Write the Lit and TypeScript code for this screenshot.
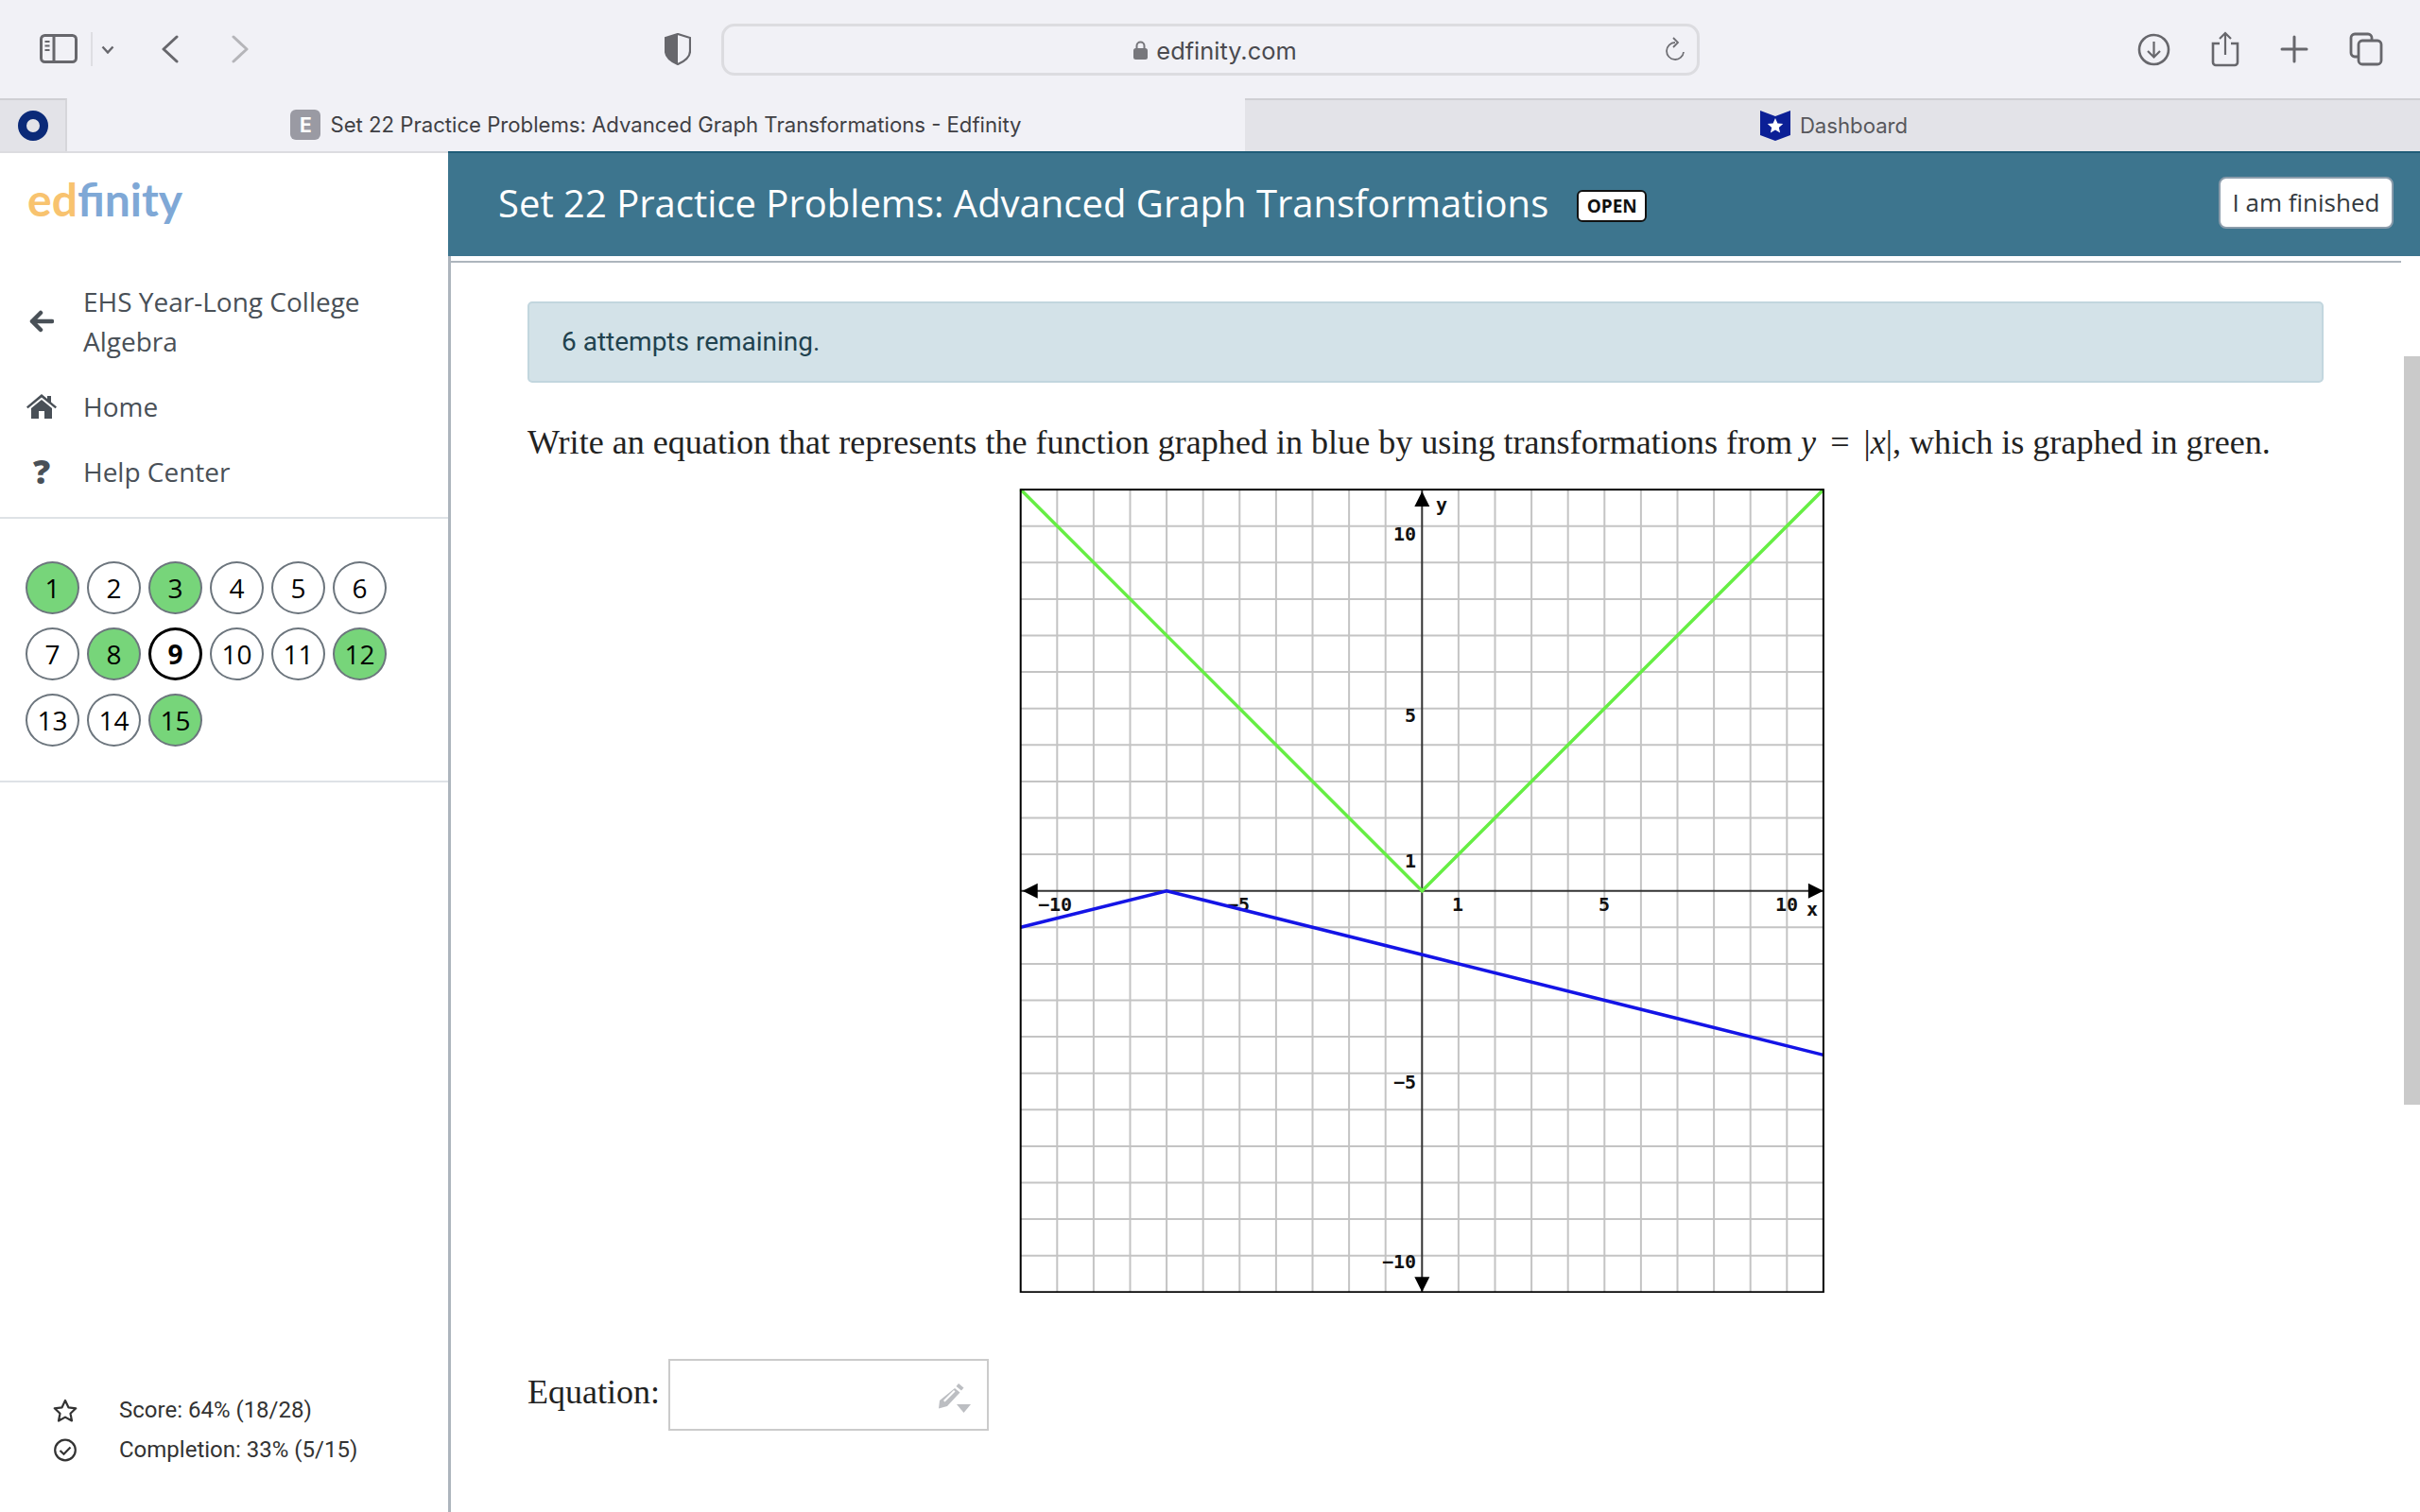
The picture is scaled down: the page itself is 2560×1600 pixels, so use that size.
import { LitElement, css, html, svg } from 'lit';
import { customElement } from 'lit/decorators.js';

const STEP = 38.6;
const OX = 426.3;
const OY = 426.7;
const px = (u: number) => OX + u * STEP;
const py = (u: number) => OY - u * STEP;

const PROBLEMS = [
    { n: 1, done: true }, { n: 2 }, { n: 3, done: true }, { n: 4 }, { n: 5 }, { n: 6 },
    { n: 7 }, { n: 8, done: true }, { n: 9, current: true }, { n: 10 }, { n: 11 }, { n: 12, done: true },
    { n: 13 }, { n: 14 }, { n: 15, done: true },
] as { n: number; done?: boolean; current?: boolean }[];

const GRID_UNITS = [-10, -9, -8, -7, -6, -5, -4, -3, -2, -1, 1, 2, 3, 4, 5, 6, 7, 8, 9, 10];

// [text, x, baseline] in graph coordinates
const GRAPH_LABELS: [string, number, number][] = [
    ['10', 396, 56], ['5', 408, 248], ['1', 408, 402],
    ['\u22125', 396, 636], ['\u221210', 384, 826],
    ['\u221210', 20, 448], ['\u22125', 220, 448], ['1', 458, 448], ['5', 613, 448], ['10', 800, 448],
    ['x', 833, 453], ['y', 441, 25],
];

@customElement('app-root')
export class AppRoot extends LitElement {
    static styles = css`
        :host {
            display: block;
            width: 2560px;
            height: 1600px;
            overflow: hidden;
            background: #fff;
            font-family: "Open Sans", sans-serif;
        }

        .toolbar {
            height: 104px;
            background: #f1f1f6;
            display: flex;
            align-items: center;
            padding: 0 39px 0 42px;
            box-sizing: border-box;
            color: #67676c;
        }
        .toolbar svg { display: block; flex: none; }
        .tb-divider { width: 2px; height: 36px; background: #dedee2; margin: 0 9px 0 14px; }
        .tb-back { margin-left: 49px; }
        .tb-forward { margin-left: 54px; }
        .tb-shield { margin-left: 439px; }
        .urlbar {
            margin-left: 32px;
            width: 1035px;
            height: 55px;
            box-sizing: border-box;
            border: 3px solid #dcdce0;
            border-radius: 14px;
            position: relative;
            display: flex;
            align-items: center;
            justify-content: center;
            gap: 9px;
            padding: 2px 0 0 10px;
            font-family: Inter, sans-serif;
            font-size: 25.4px;
            color: #4a4a4f;
        }
        .url-reload { position: absolute; right: 12px; top: 11px; }
        .tb-actions { margin-left: auto; display: flex; align-items: center; gap: 43px; }

        .tabs {
            height: 56px;
            display: flex;
            font-family: Inter, sans-serif;
            font-size: 22.15px;
            color: #3f3f44;
        }
        .tab {
            display: flex;
            align-items: center;
            justify-content: center;
            gap: 10px;
            box-sizing: border-box;
        }
        .tab-pinned { width: 71px; background: #e3e3e8; border-top: 2px solid #cfcfd3; border-right: 2px solid #d6d6da; }
        .tab-active { width: 1246px; background: #f1f1f6; }
        .tab-other { flex: 1; background: #e3e3e8; border-top: 2px solid #cfcfd3; color: #57575c; padding-left: 3px; }
        .favicon {
            width: 32px;
            height: 32px;
            border-radius: 6px;
            background: #9a9aa3;
            color: #fff;
            font-weight: 700;
            font-size: 21px;
            display: flex;
            align-items: center;
            justify-content: center;
        }

        .page { height: 1440px; display: flex; position: relative; }

        aside {
            width: 477px;
            flex: none;
            box-sizing: border-box;
            border-right: 3px solid #adb5bd;
            border-top: 2px solid #dcdce0;
            display: flex;
            flex-direction: column;
            color: #495057;
        }
        .logo {
            font-family: Lato, sans-serif;
            font-weight: 700;
            font-size: 48px;
            line-height: 60px;
            height: 60px;
            margin: 19px 0 2px 29px;
            color: #7fa8d6;
        }
        .logo span { color: #f8c36f; }
        .nav { margin-top: 55px; display: flex; flex-direction: column; border-bottom: 2px solid #dee2e6; padding-bottom: 27px; }
        .nav-item {
            display: grid;
            grid-template-columns: 88px 1fr;
            align-items: center;
            font-size: 28px;
            line-height: 42px;
            margin-bottom: 27px;
        }
        .nav-item:last-child { margin-bottom: 0; }
        .nav-icon { display: flex; justify-content: center; width: 88px; }
        .nav-icon svg { display: block; }
        .help-icon { font-weight: 800; font-size: 36px; line-height: 42px; color: #495057; }

        .bubbles {
            display: grid;
            grid-template-columns: repeat(6, 57px);
            grid-auto-rows: 56px;
            column-gap: 8px;
            row-gap: 14px;
            padding: 45px 0 36px 27px;
            border-bottom: 2px solid #dee2e6;
        }
        .bubble {
            box-sizing: border-box;
            border: 2px solid #6c757d;
            border-radius: 50%;
            background: #fff;
            color: #000;
            font-size: 28px;
            display: flex;
            align-items: center;
            justify-content: center;
        }
        .bubble.done { background: #77d57a; }
        .bubble.current { border: 3px solid #000; font-weight: 700; }

        .stats {
            margin-top: auto;
            padding: 0 0 45px 56px;
            font-family: Roboto, sans-serif;
            font-size: 24px;
            line-height: 42px;
            color: #333;
        }
        .stat { display: flex; align-items: center; }
        .stat svg { display: block; flex: none; margin-right: 44px; }

        main { flex: 1; min-width: 0; display: flex; flex-direction: column; }
        .banner {
            height: 111px;
            flex: none;
            margin-left: -3px;
            background: #3d758e;
            border-top: 2px solid #1f5c78;
            box-sizing: border-box;
            display: flex;
            align-items: center;
            padding: 0 28px 4px 53px;
            color: #fff;
        }
        .banner h1 { margin: 0; font-weight: 400; font-size: 40px; line-height: 1; }
        .badge {
            margin: 6px 0 0 30px;
            box-sizing: border-box;
            width: 74px;
            height: 34px;
            background: #fff;
            color: #111;
            border: 2px solid #111;
            border-radius: 6px;
            font-size: 19px;
            font-weight: 700;
            display: flex;
            align-items: center;
            justify-content: center;
        }
        .finish {
            margin: 0 0 0 auto;
            box-sizing: border-box;
            width: 185px;
            height: 55px;
            background: #fff;
            border: 2px solid #8b9cab;
            border-radius: 8px;
            color: #343a40;
            font-family: inherit;
            font-size: 26px;
            padding: 0 0 2px;
        }
        .rule { height: 2px; background: #adb5bd; margin: 5px 20px 0 0; flex: none; }

        .content { padding: 41px 102px 0 81px; }
        .alert {
            height: 86px;
            box-sizing: border-box;
            background: #d3e2e8;
            border: 2px solid #c2d6de;
            border-radius: 5px;
            display: flex;
            align-items: center;
            padding: 0 34px 2px;
            font-family: Roboto, sans-serif;
            font-size: 28px;
            color: #21424f;
        }
        .question {
            margin: 38px 0 0;
            font-family: "Liberation Serif", serif;
            font-size: 36.09px;
            line-height: 50px;
            color: #222;
            white-space: nowrap;
        }
        .math { font-style: italic; }
        .eq { margin: 0 6px; }
        .graph { display: block; margin: 23px 0 0 520px; }
        .graph text { font-family: "DejaVu Sans Mono", monospace; font-weight: 700; font-size: 20px; fill: #111; }

        .answer { display: flex; align-items: center; margin-top: 70px; }
        .answer label { font-family: "Liberation Serif", serif; font-size: 36px; color: #222; margin: 0 9px 6px 0; }
        .field {
            width: 339px;
            height: 76px;
            box-sizing: border-box;
            border: 2px solid #cbcbcb;
            display: flex;
            align-items: center;
            justify-content: flex-end;
            padding-right: 17px;
        }
        .field svg { display: block; margin-top: 6px; }

        .scrollbar { position: absolute; right: 0; top: 217px; width: 17px; height: 792px; background: #cacaca; }
    `;

    renderToolbar() {
        return html`
            <div class="toolbar">
                <svg width="40" height="32" viewBox="0 0 40 32" fill="none" stroke="#67676c" stroke-width="3">
                    <rect x="1.5" y="1.5" width="37" height="28" rx="4"/>
                    <path d="M15 2v27"/>
                    <path d="M5.5 8h5M5.5 12.5h5M5.5 17h5" stroke-width="2"/>
                </svg>
                <div class="tb-divider"></div>
                <svg width="14" height="9" viewBox="0 0 14 9" fill="none" stroke="#67676c" stroke-width="2.4"><path d="M1.5 1.5L7 7.5l5.5-6"/></svg>
                <svg class="tb-back" width="20" height="30" viewBox="0 0 20 30" fill="none" stroke="#67676c" stroke-width="3" stroke-linecap="round" stroke-linejoin="round"><path d="M17 2L3 15l14 13"/></svg>
                <svg class="tb-forward" width="20" height="30" viewBox="0 0 20 30" fill="none" stroke="#b5b5b9" stroke-width="3" stroke-linecap="round" stroke-linejoin="round"><path d="M3 2l14 13L3 28"/></svg>
                <svg class="tb-shield" width="28" height="34" viewBox="0 0 28 34">
                    <path d="M14 1L27 5v14c0 6-6 11-13 14C7 30 1 25 1 19V5z" fill="none" stroke="#67676c" stroke-width="2.2"/>
                    <path d="M14 1L1 5v14c0 6 6 11 13 14z" fill="#67676c"/>
                </svg>
                <div class="urlbar">
                    <svg width="15" height="20" viewBox="0 0 15 20"><path d="M3.5 9V5.5a4 4 0 0 1 8 0V9" fill="none" stroke="#77777c" stroke-width="2"/><rect y="8" width="15" height="12" rx="2.5" fill="#77777c"/></svg>
                    edfinity.com
                    <svg class="url-reload" width="22" height="28" viewBox="0 0 22 28" fill="none" stroke="#6f6f74" stroke-width="1.8"><path d="M11 6a9 9 0 1 0 9 10"/><path d="M9 1l5 5-5 5"/></svg>
                </div>
                <div class="tb-actions">
                    <svg width="35" height="35" viewBox="0 0 35 35" fill="none" stroke="#67676c" stroke-width="2.6"><circle cx="17.5" cy="17.5" r="15.5"/><path d="M17.5 9v16M11 19l6.5 6.500L24 19" stroke-width="2.2"/></svg>
                    <svg width="30" height="38" viewBox="0 0 30 38" fill="none" stroke="#67676c" stroke-width="2.6"><path d="M9 13H2v20a3 3 0 0 0 3 3h20a3 3 0 0 0 3-3V13h-7"/><path d="M15 25V2M9 8l6-6 6 6" stroke-width="2.200"/></svg>
                    <svg width="30" height="30" viewBox="0 0 30 30" stroke="#67676c" stroke-width="3" stroke-linecap="round"><path d="M15 2v26M2 15h26"/></svg>
                    <svg width="36" height="36" viewBox="0 0 36 36" fill="none" stroke="#67676c" stroke-width="2.8"><path d="M9 26H6a4 4 0 0 1-4-4V6a4 4 0 0 1 4-4h14a4 4 0 0 1 4 4v3"/><rect x="10" y="9" width="24" height="25" rx="4"/></svg>
                </div>
            </div>
        `;
    }

    renderTabs() {
        return html`
            <div class="tabs">
                <div class="tab tab-pinned">
                    <svg width="32" height="32" viewBox="0 0 32 32"><circle cx="16" cy="16" r="11.500" fill="none" stroke="#0b2a78" stroke-width="9"/></svg>
                </div>
                <div class="tab tab-active">
                    <span class="favicon">E</span>
                    Set 22 Practice Problems: Advanced Graph Transformations - Edfinity
                </div>
                <div class="tab tab-other">
                    <svg width="32" height="32" viewBox="0 0 32 32">
                        <path d="M0 0l16 6 16-6v26l-16 6-16-6z" fill="#0b1f96"/>
                        <path d="M16 8l2.400 5.400 5.800.6-4.400 3.900 1.300 5.700-5.100-3-5.100 3 1.300-5.700-4.400-3.900 5.800-.6z" fill="#fff"/>
                    </svg>
                    Dashboard
                </div>
            </div>
        `;
    }

    renderSidebar() {
        return html`
            <aside>
                <div class="logo"><span>ed</span>finity</div>
                <div class="nav">
                    <div class="nav-item">
                        <span class="nav-icon">
                            <svg width="26" height="24" viewBox="0 0 26 24" fill="none" stroke="#495057" stroke-width="4.500" stroke-linecap="round" stroke-linejoin="round"><path d="M24 12H3M12 3l-9 9 9 9"/></svg>
                        </span>
                        <span>EHS Year-Long College<br>Algebra</span>
                    </div>
                    <div class="nav-item">
                        <span class="nav-icon">
                            <svg width="32" height="26" viewBox="0 0 32 26" fill="#495057"><path d="M16 0l6 5V2h4v6.500l6 5-1.500 1.800L16 3.500 1.500 15.300 0 13.500z"/><path d="M16 6l11 9v11h-8v-8h-6v8H5V15z"/></svg>
                        </span>
                        <span>Home</span>
                    </div>
                    <div class="nav-item">
                        <span class="nav-icon help-icon">?</span>
                        <span>Help Center</span>
                    </div>
                </div>
                <div class="bubbles">
                    ${PROBLEMS.map(p => html`<div class="bubble ${p.done ? 'done' : ''} ${p.current ? 'current' : ''}">${p.n}</div>`)}
                </div>
                <div class="stats">
                    <div class="stat">
                        <svg width="26" height="25" viewBox="0 0 26 25" fill="none" stroke="#333" stroke-width="2.200" stroke-linejoin="round"><path d="M13 2l3.400 7.300 7.900 1-5.800 5.400 1.500 7.800-7-3.900-7 3.900 1.500-7.800L1.700 10.300l7.900-1z"/></svg>
                        Score: 64% (18/28)
                    </div>
                    <div class="stat">
                        <svg width="26" height="25" viewBox="0 0 26 25" fill="none" stroke="#333" stroke-width="2.200"><circle cx="13" cy="12.500" r="10.800"/><path d="M7.500 13l4 3.800 7-7.300"/></svg>
                        Completion: 33% (5/15)
                    </div>
                </div>
            </aside>
        `;
    }

    renderGraph() {
        const left = px(-11);
        const right = px(11);
        const top = py(11);
        const bottom = py(-11);
        return html`
            <svg class="graph" width="852" height="852" viewBox="0 0 852 852">
                ${GRID_UNITS.map(u => svg`
                    <line x1=${px(u)} x2=${px(u)} y1=${top} y2=${bottom} stroke="#c4c4c4" stroke-width="2"/>
                    <line x1=${left} x2=${right} y1=${py(u)} y2=${py(u)} stroke="#c4c4c4" stroke-width="2"/>
                `)}
                <line x1=${OX} x2=${OX} y1=${top} y2=${bottom} stroke="#333" stroke-width="2"/>
                <line x1=${left} x2=${right} y1=${OY} y2=${OY} stroke="#333" stroke-width="2"/>
                <polygon points="${OX},${top + 2} ${OX - 8},${top + 18} ${OX + 8},${top + 18}" fill="#000"/>
                <polygon points="${OX},${bottom} ${OX - 8},${bottom - 16} ${OX + 8},${bottom - 16}" fill="#000"/>
                <polygon points="${left + 2},${OY} ${left + 18},${OY - 8} ${left + 18},${OY + 8}" fill="#000"/>
                <polygon points="${right},${OY} ${right - 16},${OY - 8} ${right - 16},${OY + 8}" fill="#000"/>
                ${GRAPH_LABELS.map(([t, x, y]) => svg`<text x=${x} y=${y}>${t}</text>`)}
                <polyline points="${left},${top} ${OX},${OY} ${right},${top}" fill="none" stroke="#66ee44" stroke-width="3.500"/>
                <polyline points="${left},${py(-1)} ${px(-7)},${OY} ${right},${py(-4.5)}" fill="none" stroke="#1414e6" stroke-width="3.500"/>
                <rect x=${left} y=${top} width=${right - left} height=${bottom - top} fill="none" stroke="#000" stroke-width="2"/>
            </svg>
        `;
    }

    render() {
        return html`
            ${this.renderToolbar()}
            ${this.renderTabs()}
            <div class="page">
                ${this.renderSidebar()}
                <main>
                    <div class="banner">
                        <h1>Set 22 Practice Problems: Advanced Graph Transformations</h1>
                        <span class="badge">OPEN</span>
                        <button class="finish">I am finished</button>
                    </div>
                    <div class="rule"></div>
                    <div class="content">
                        <div class="alert">6 attempts remaining.</div>
                        <p class="question">Write an equation that represents the function graphed in blue by using transformations from <span class="math">y</span> <span class="eq">=</span> |<span class="math">x</span>|, which is graphed in green.</p>
                        ${this.renderGraph()}
                        <div class="answer">
                            <label>Equation:</label>
                            <div class="field">
                                <svg width="34" height="31" viewBox="0 0 34 31" fill="#bcbec2">
                                    <path d="M21 0l5.500 4.500-2.500 3-5.500-4.500zM17 5l5.500 4.500L9 24l-9 2.500L1 18z"/>
                                    <path d="M5 18L16 7l1.500 1.500L6.500 19.500z" fill="#fff"/>
                                    <path d="M19 22h15l-7.500 9z"/>
                                </svg>
                            </div>
                        </div>
                    </div>
                </main>
                <div class="scrollbar"></div>
            </div>
        `;
    }
}
